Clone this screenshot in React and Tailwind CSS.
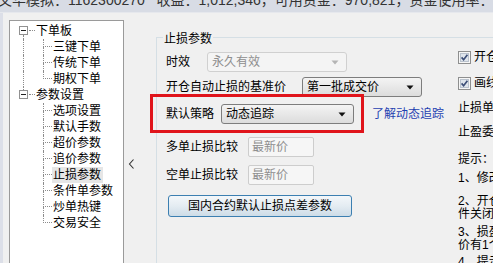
import React from 'react';

const tree = [
  { label: '下单板', children: ['三键下单', '传统下单', '期权下单'] },
  {
    label: '参数设置',
    children: ['选项设置', '默认手数', '超价参数', '追价参数', '止损参数', '条件单参数', '炒单热键', '交易安全'],
  },
];

const dot = 'border-dotted border-[#8c8c8c]';

const ExpandBox = ({ lineAbove, lineBelow }) => (
  <div className="flex w-[9px] shrink-0 flex-col">
    <div className={`h-[3px] ml-[4px] ${lineAbove ? `border-l ${dot}` : ''}`} />
    <div className="flex h-[9px] w-[9px] items-center justify-center border border-[#919191] bg-white">
      <div className="h-px w-[5px] bg-[#222]" />
    </div>
    <div className={`h-[4px] ml-[4px] ${lineBelow ? `border-l ${dot}` : ''}`} />
  </div>
);

const ParentRow = ({ label, lineAbove, lineBelow }) => (
  <div className="flex h-[16px] pl-[9px]">
    <ExpandBox lineAbove={lineAbove} lineBelow={lineBelow} />
    <div className={`ml-[1px] mt-[7px] h-px w-[6px] border-t ${dot}`} />
    <span className="ml-[1px] leading-[16px]">{label}</span>
  </div>
);

const ChildRow = ({ label, trunk, last, selected }) => (
  <div className="flex h-[16px]">
    <div className="w-[13px] shrink-0" />
    <div className={`w-[20px] shrink-0 ${trunk ? `border-l ${dot}` : ''}`} />
    <div className="flex w-[9px] shrink-0 flex-col">
      <div className={`h-[8px] border-l border-b ${dot}`} />
      <div className={`h-[8px] ${last ? '' : `border-l ${dot}`}`} />
    </div>
    <span className={`pl-[1px] pr-[2px] leading-[16px] ${selected ? 'bg-[#e6e6e6]' : ''}`}>{label}</span>
  </div>
);

const Arrow = ({ color = '#111' }) => (
  <svg width="8" height="5" viewBox="0 0 8 5">
    <path d="M0.5 0.5h7l-3.5 4z" fill={color} />
  </svg>
);

const Combo = ({ value, width, disabled }) => (
  <div
    className={`flex h-[20px] items-center justify-between rounded-[3px] border pl-[4px] pr-[7px] ${
      disabled
        ? 'border-[#d0d0d0] bg-[#f4f4f4] text-[#8e8e8e]'
        : 'border-[#7d7d7d] bg-linear-to-b from-[#f4f4f4] to-[#dcdcdc] text-black'
    }`}
    style={{ width }}
  >
    <span className="leading-[16px]">{value}</span>
    <Arrow color={disabled ? '#b4b4b4' : '#111'} />
  </div>
);

const TextBox = ({ value }) => (
  <div className="flex h-[20px] w-[66px] items-center rounded-[2px] border border-[#cdcdcd] bg-[#f6f6f6] pl-[3px] text-[#8e8e8e]">
    {value}
  </div>
);

const Check = () => (
  <svg width="13" height="13" viewBox="0 0 13 13" className="shrink-0">
    <rect x="0.5" y="0.5" width="12" height="12" fill="#f6f6f6" stroke="#8e8f8f" />
    <rect x="2.5" y="2.5" width="8" height="8" fill="#dfe5ec" stroke="#b9c2cd" />
    <path d="M3.6 6.4l2 2.3 3.8-5" fill="none" stroke="#3d4f78" strokeWidth="1.7" />
  </svg>
);

const App = () => {
  return (
    <div className="flex h-[263px] w-[493px] flex-col overflow-hidden bg-[#f0f0f0] text-[12px] text-black font-['Liberation_Sans','Noto_Sans_CJK_SC',sans-serif]">
      {/* status strip, mostly scrolled out of view */}
      <div className="h-[12px] shrink-0 overflow-hidden whitespace-nowrap bg-[#d8dce5] text-[14px] text-[#333]">
        <div className="-ml-[2px] -mt-[7px] leading-[14px]">
          文华模拟：1162300270&nbsp;&nbsp;&nbsp;收益：1,012,346，可用资金：970,821，资金使用率：12.5%
        </div>
      </div>
      <div className="h-px shrink-0 bg-[#e6e8ed]" />

      <div className="flex min-h-0 flex-1">
        <div className="w-[3px] shrink-0 bg-[#dcdfe8]" />

        {/* tree */}
        <div className="ml-[6px] mt-[7px] h-[260px] w-[115px] shrink-0 border border-[#9a9a9a] bg-white pt-[2px]">
          {tree.map((node, i) => (
            <div key={node.label}>
              <ParentRow label={node.label} lineAbove={i > 0} lineBelow={i < tree.length - 1} />
              {node.children.map((c, j) => (
                <ChildRow
                  key={c}
                  label={c}
                  trunk={i < tree.length - 1}
                  last={j === node.children.length - 1}
                  selected={c === '止损参数'}
                />
              ))}
            </div>
          ))}
        </div>

        {/* collapse handle */}
        <div className="w-[32px] shrink-0 pl-[4px] pt-[146px]">
          <svg width="7" height="10" viewBox="0 0 7 10">
            <path d="M5.5 0.5L1.5 5l4 4.5" fill="none" stroke="#333" strokeWidth="1.1" />
          </svg>
        </div>

        {/* group box */}
        <div className="mt-[24px] flex flex-1 border-l border-t border-[#d5dfe5]">
          <div className="flex w-[301px] shrink-0 flex-col">
            <div className="-mt-[7px] ml-[6px] w-fit bg-[#f0f0f0] px-[1px] leading-[16px]">止损参数</div>

            <div className="mt-[5px] flex h-[20px] items-center pl-[9px]">
              <span className="w-[41px]">时效</span>
              <Combo value="永久有效" width={140} disabled />
            </div>

            <div className="mt-[5px] flex h-[20px] items-center pl-[9px]">
              <span className="w-[136px]">开仓自动止损的基准价</span>
              <Combo value="第一批成交价" width={120} />
            </div>

            <div className="relative mt-[7px] flex h-[20px] items-center pl-[9px]">
              <span className="w-[55px]">默认策略</span>
              <Combo value="动态追踪" width={133} />
              <span className="ml-[18px] text-[#1f3fb0]">了解动态追踪</span>
              <div className="pointer-events-none absolute -left-[7px] -top-[10px] h-[39px] w-[214px] border-[3px] border-[#e0141b]" />
            </div>

            <div className="mt-[13px] flex h-[20px] items-center pl-[9px]">
              <span className="w-[82px]">多单止损比较</span>
              <TextBox value="最新价" />
            </div>

            <div className="mt-[8px] flex h-[20px] items-center pl-[9px]">
              <span className="w-[82px]">空单止损比较</span>
              <TextBox value="最新价" />
            </div>

            <button className="ml-[11px] mt-[10px] h-[22px] w-[184px] rounded-[3px] border border-[#3c7fb1] bg-linear-to-b from-[#f3f7fa] via-[#e4ecf2] to-[#cddce7] text-[12px] leading-[16px]">
              国内合约默认止损点差参数
            </button>
          </div>

          {/* notes on the right, clipped by the window */}
          <div className="flex w-[220px] shrink-0 flex-col whitespace-nowrap">
            <div className="mt-[13px] flex h-[13px] items-center gap-[3px]">
              <Check />
              <span className="leading-[13px]">开仓后自动设置止损</span>
            </div>
            <div className="mt-[13px] flex h-[13px] items-center gap-[3px]">
              <Check />
              <span className="leading-[13px]">画线下单自动止损</span>
            </div>
            <div className="mt-[10px] leading-[16px]">止损单触发后自动撤单</div>
            <div className="mt-[8px] leading-[16px]">止盈委托价格方式</div>
            <div className="mt-[11px] leading-[16px]">提示：</div>
            <div className="mt-[3px] leading-[16px]">1、修改参数后立即生效</div>
            <div className="mt-[9px] leading-[13px]">
              <div>2、开仓自动止损在软</div>
              <div>件关闭后失效</div>
            </div>
            <div className="mt-[5px] leading-[13px]">
              <div>3、损盈价格以最新</div>
              <div>价有1个以上变动</div>
            </div>
            <div className="mt-[4px] leading-[13px]">4、提示信息</div>
          </div>
        </div>
      </div>
    </div>
  );
};

export default App;
